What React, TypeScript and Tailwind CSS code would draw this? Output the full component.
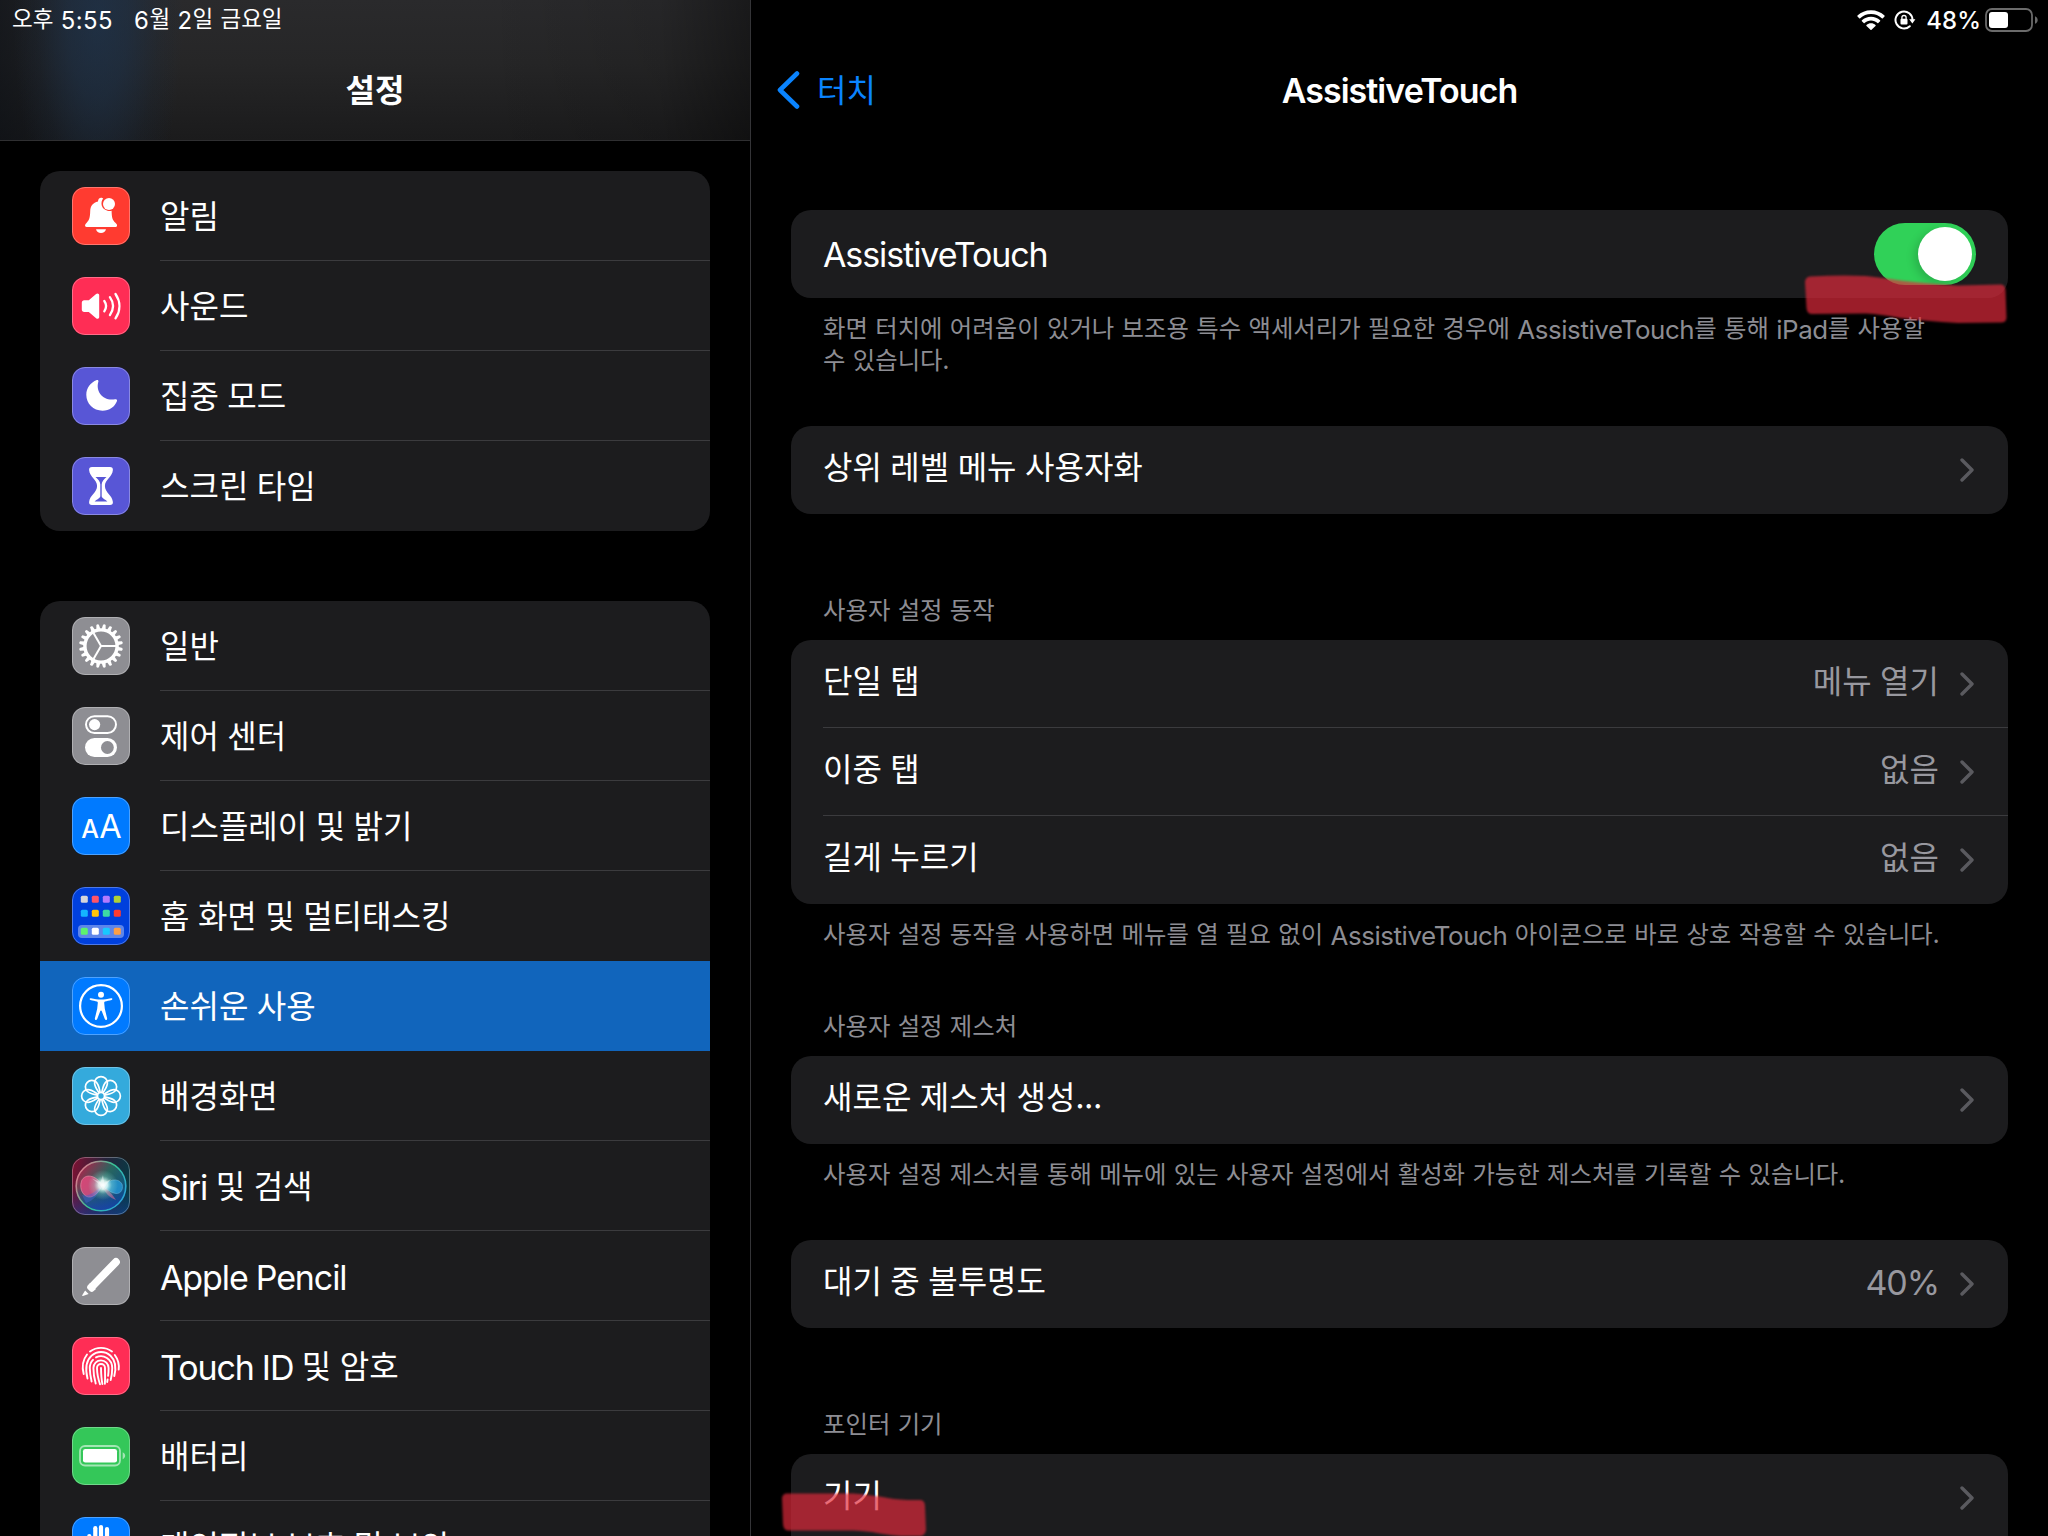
import React from "react";
import clsx from "clsx";

// Latin runs are set in Inter, a little larger than the Hangul beside them,
// and the Hangul sits slightly above the Latin baseline
function Label({ children, latin = "tracking-[-0.032em]" }: { children: string; latin?: string }) {
  const parts = children.split(/([A-Za-z0-9%:]+(?: [A-Za-z0-9%:]+)*)/);
  return (
    <span>
      {parts.map((part, i) => {
        if (!part) return null;
        return i % 2 === 1 ? (
          <span key={i} className={clsx("font-['Inter',sans-serif] text-[1.0625em] leading-none", latin)}>
            {part}
          </span>
        ) : (
          <span key={i} className="align-[0.07em] leading-none">{part}</span>
        );
      })}
    </span>
  );
}

const BellIcon = () => (
  <>
    <path
      fill="#fff"
      d="M26 14.6c0-2.400 1.300-3.900 3.200-3.900 1 0 1.400.3 2 .8-3.200 4-2 10.500 4.300 12.200 1.400.4 3 .4 4.100 0 .2 6.600.7 9.100 3.800 12.100 1.400 1.300 2.200 2.400 1.300 3.600-.3.400-.8.500-1.400.500H14.700c-1.600 0-2.200-1.800-1.100-3 3.300-3.300 4.400-5.100 4.600-12.600.2-5.400 2.800-8.600 7.800-9.700z"
    />
    <circle cx="37" cy="17" r="6" fill="#fff" />
    <path fill="#fff" d="M24 42.200h10c-.4 2.400-2.500 3.800-5 3.800s-4.600-1.400-5-3.800z" />
  </>
);

const SoundIcon = () => (
  <>
    <path
      fill="#fff"
      d="M12.200 23.300h4.600l7.300-6.300c1.300-1.100 3.100-.4 3.100 1.300v21.600c0 1.700-1.800 2.400-3.100 1.300l-7.300-6.200h-4.600c-1.500 0-2.400-.9-2.400-2.400v-6.900c0-1.500.9-2.400 2.400-2.400z"
    />
    <g fill="none" stroke="#fff" strokeWidth="2.3" strokeLinecap="round">
      <path d="M32.300 24c2.300 3.300 2.300 7 0 10.300" />
      <path d="M37.900 20.200c4 5.600 4 12.200 0 17.900" />
      <path d="M43.500 17c5.200 7.600 5.200 16.700 0 24.300" />
    </g>
  </>
);

const MoonIcon = () => (
  <path
    fill="#fff"
    d="M24.800 13c.9-.4 1.900.3 1.600 1.400-3.200 10.200 4.900 20 16.700 17.800 1.200-.2 2.300.5 1.900 1.700-2.200 5.800-7.700 9.800-14.500 9.800-9.300 0-16.200-6.800-16.200-15.900 0-6.600 4.200-12.400 10.500-14.800z"
  />
);

const HourglassIcon = () => (
  <>
    <path
      fill="#fff"
      d="M20 9.900h18c2 0 3.100 1 2.900 3-.5 6.900-8 9.500-8 16.100s7.500 9.200 8 16.100c.2 2-.9 3-2.900 3H20c-2 0-3.100-1-2.900-3 .5-6.900 8-9.500 8-16.100s-7.500-9.200-8-16.100c-.2-2 .9-3 2.900-3z"
    />
    <path
      fill="#5856d6"
      d="M23.500 20h11c-2.600 2.400-4.800 4.500-4.800 7.500V39c0 2 2.700 3 5.700 5.400H22.600c3-2.400 5.700-3.400 5.700-5.400V27.500c0-3-2.200-5.100-4.800-7.500z"
    />
  </>
);

const teeth = Array.from({ length: 20 }, (_, i) => i * 18 + 9);

const GearIcon = () => (
  <>
    <g fill="#fff">
      {teeth.map((a) => (
        <path key={a} d="M26.900 13l.8-5.400q1.300-1.200 2.600 0L31.100 13z" transform={`rotate(${a} 29 29)`} />
      ))}
    </g>
    <g fill="none" stroke="#fff">
      <circle cx="29" cy="29" r="16.100" strokeWidth="3.400" />
      {[90, 210, 330].map((a) => (
        <path key={a} d="M29 29V14" strokeWidth="2" transform={`rotate(${a} 29 29)`} />
      ))}
    </g>
  </>
);

const TogglesIcon = () => (
  <>
    <rect x="14" y="9.200" width="30" height="16.800" rx="8.400" fill="none" stroke="#fff" strokeWidth="2" />
    <circle cx="22.600" cy="17.600" r="5.600" fill="#fff" />
    <rect x="13" y="31" width="32" height="19" rx="9.500" fill="#fff" />
    <circle cx="35.400" cy="40.500" r="6.400" fill="#8e8e93" />
  </>
);

const TextSizeIcon = () => (
  <g fill="#fff" className="font-['Inter',sans-serif]" textAnchor="middle">
    <text x="18" y="41.300" fontSize="25" fontWeight="500">A</text>
    <text x="38.400" y="41.300" fontSize="32.500" fontWeight="400">A</text>
  </g>
);

const apps = [
  ["#d5d5da", "#ff5468", "#b37aff", "#aed136"],
  ["#14b5ff", "#ffc60a", "#3ddaa4", "#ff3b30"],
  ["#5df26d", "#ffffff", "#18c8ff", "#ff9f45"],
];

const HomeIcon = () => (
  <>
    <rect x="6" y="38" width="46" height="13" rx="4" fill="#5e86ea" />
    {apps.map((row, r) =>
      row.map((color, c) => (
        <rect key={color} x={8.8 + c * 11} y={[8.8, 22.8, 40.8][r]} width="7" height="7" rx="1.500" fill={color} />
      ))
    )}
  </>
);

const AccessibilityIcon = () => (
  <>
    <circle cx="29" cy="29" r="20.900" fill="none" stroke="#fff" strokeWidth="2.200" />
    <circle cx="29" cy="17.800" r="3" fill="#fff" />
    <path
      fill="#fff"
      d="M18.900 21.200c3.600.9 6.800 1.400 10.100 1.400s6.500-.5 10.100-1.400c1.400-.3 1.800 1.400.5 1.800-2.500.7-4.900 1.100-6.600 1.500-.7.200-.9.700-.8 1.500l.6 5.800 2.300 9.500c.4 1.800-1.700 2.300-2.300.7l-3-7.800c-.3-.9-1.300-.9-1.600 0l-3 7.800c-.6 1.600-2.700 1.100-2.300-.7l2.300-9.500.6-5.800c.1-.8-.1-1.300-.8-1.500-1.700-.4-4.100-.8-6.600-1.500-1.300-.4-.9-2.100.5-1.800z"
    />
  </>
);

const FlowerIcon = () => (
  <g fill="none" stroke="#fff" strokeWidth="1.700">
    {[0, 45, 90, 135, 180, 225, 270, 315].map((a) => (
      <path
        key={a}
        d="M27 25.800C25 22.500 22.600 19.500 22.600 15.900a6.400 6.300 0 0 1 12.800 0c0 3.600-2.400 6.600-4.400 9.900"
        transform={`rotate(${a} 29 29)`}
      />
    ))}
    <circle cx="29" cy="29" r="3.500" />
  </g>
);

const SiriIcon = () => (
  <>
    <defs>
      <linearGradient id="siri-bg" x1="0" y1="0.3" x2="1" y2="0.5">
        <stop offset="0" stopColor="#7a1233" />
        <stop offset="0.5" stopColor="#27243c" />
        <stop offset="1" stopColor="#063b45" />
      </linearGradient>
      <linearGradient id="siri-orb" x1="0.1" y1="0.2" x2="0.9" y2="0.8">
        <stop offset="0" stopColor="#9c2b4d" />
        <stop offset="0.45" stopColor="#28655f" />
        <stop offset="1" stopColor="#0b4f86" />
      </linearGradient>
      <linearGradient id="siri-ring" x1="0" y1="0.2" x2="1" y2="0.8">
        <stop offset="0" stopColor="#f0728d" />
        <stop offset="0.5" stopColor="#35c495" />
        <stop offset="1" stopColor="#2aa0e0" />
      </linearGradient>
      <linearGradient id="siri-low" x1="0" y1="0" x2="0" y2="1">
        <stop offset="0.55" stopColor="#1838a8" stopOpacity="0" />
        <stop offset="1" stopColor="#1b3fb5" stopOpacity="0.75" />
      </linearGradient>
      <radialGradient id="siri-glow">
        <stop offset="0" stopColor="#fff" />
        <stop offset="0.3" stopColor="#e6fff9" stopOpacity="0.85" />
        <stop offset="0.6" stopColor="#9fe8dd" stopOpacity="0.3" />
        <stop offset="1" stopColor="#9fe8dd" stopOpacity="0" />
      </radialGradient>
    </defs>
    <rect width="58" height="58" fill="url(#siri-bg)" />
    <rect width="58" height="58" fill="url(#siri-low)" opacity="0.6" />
    <circle cx="29" cy="29" r="24.800" fill="url(#siri-orb)" stroke="url(#siri-ring)" strokeWidth="1.600" />
    <circle cx="29" cy="29" r="24" fill="url(#siri-low)" />
    <path d="M30 28C24 18 13 16 9.500 24c-3 9 3 17 9 16 5-1 9-6 11.500-12z" fill="#ea4a80" opacity="0.8" stroke="#ff9cb8" strokeWidth="0.700" />
    <path d="M31 29c5-6 15-9 19-2 2 7-3 11-8 9-4-1-8-4-11-7z" fill="#27a2e6" opacity="0.7" stroke="#7fd4ff" strokeWidth="0.600" />
    <path d="M30 29c5 2 10 8 14 14-6-2-11-7-14-14z" fill="#cf6a9a" opacity="0.6" />
    <path d="M10 38c6 2 13-3 20-9-4 9-9 15-16 17z" fill="#4b62d8" opacity="0.45" />
    <circle cx="31" cy="28" r="15" fill="url(#siri-glow)" />
    <path d="M31 18l1.200 7.500L39 22l-4.500 5.500L31 33l-3-5-8-6.500 8.500 3.800z" fill="#fff" opacity="0.4" />
  </>
);

const PencilIcon = () => (
  <>
    <path stroke="#fff" strokeWidth="7.800" strokeLinecap="round" d="M44 15L21 38.600" />
    <path fill="#fff" d="M18 36l6 6-2.600 2.300c-1 .8-2.200.8-3.400 0l-2.300-2.300c-1-1.200-.9-2.300 0-3.500z" />
    <path fill="#fff" d="M13.100 43.600l3.500 3.400-5.700 2c-.6.100-.9-.2-.7-.7z" />
  </>
);

const FingerprintIcon = () => (
  <g fill="none" stroke="#fff" strokeWidth="1.900" strokeLinecap="round">
    <path d="M18 14.500C24.500 9.600 33.500 9.600 40 14.500" />
    <path d="M42.800 18c3.300 4.500 4.500 9.300 3.900 14.500" />
    <path d="M15 17.500c-4.300 5.500-5.300 12-3.300 19.500" />
    <path d="M15.500 41.500c-2.800-11.500-.8-18.500 4.100-22.900 5.400-4.800 13.600-4.800 18.900.1 5.500 5.100 5.900 11.800 3.800 20.300" />
    <path d="M19.600 44.500c-1.300-5.500-1.800-8.500-1.800-13.500 0-3.800 1.300-6.300 3.200-8.200" />
    <path d="M24 20.400c7.500-3.700 16.200 1.600 16.200 10.600 0 4.500-.4 8-1.500 12" />
    <path d="M23.700 46.500c-1.700-6-2.300-10-2.300-15.500 0-4.300 3.300-7.600 7.600-7.600s7.600 3.400 7.600 7.600c0 3-.1 5.500-.5 7.800" />
    <path d="M28 47.300c-2-6-3-10.300-3-16.300 0-2.200 1.700-4 4-4s4 1.800 4 4c0 5.800.3 9.500-.1 15.700" />
    <path d="M29 31c.1 6 .3 10.500 1.400 16" />
    <path d="M35.600 42.500l-.4 2.500" />
  </g>
);

const BatteryIcon = () => (
  <>
    <rect x="8" y="19" width="40" height="19.500" rx="5" fill="none" stroke="#fff" strokeOpacity="0.55" strokeWidth="1.800" />
    <rect x="11" y="21.900" width="34" height="13.700" rx="2.400" fill="#fff" />
    <path fill="#fff" fillOpacity="0.55" d="M50.700 25.300c3.300 1.600 3.300 5.300 0 6.900z" />
  </>
);

const HandIcon = () => (
  <>
    <g stroke="#fff" strokeWidth="4.200" strokeLinecap="round">
      <path d="M17.300 19v12" />
      <path d="M23.300 11.200V30" />
      <path d="M29 10V30" />
      <path d="M35 12V30" />
    </g>
    <path fill="#fff" d="M15.200 28h22v8l5-5c2-2 4 0 3 2-4 9-8 15-16 15s-14-6-14-14z" />
  </>
);

interface Item {
  label: string;
  bg: string;
  icon: React.FC;
  selected?: boolean;
}

const groups: Item[][] = [
  [
    { label: "알림", bg: "bg-[#ff3b30]", icon: BellIcon },
    { label: "사운드", bg: "bg-[#ff2d55]", icon: SoundIcon },
    { label: "집중 모드", bg: "bg-[#5856d6]", icon: MoonIcon },
    { label: "스크린 타임", bg: "bg-[#5856d6]", icon: HourglassIcon },
  ],
  [
    { label: "일반", bg: "bg-[#8e8e93]", icon: GearIcon },
    { label: "제어 센터", bg: "bg-[#8e8e93]", icon: TogglesIcon },
    { label: "디스플레이 및 밝기", bg: "bg-[#007aff]", icon: TextSizeIcon },
    { label: "홈 화면 및 멀티태스킹", bg: "bg-[#0040dd]", icon: HomeIcon },
    { label: "손쉬운 사용", bg: "bg-[#007aff]", icon: AccessibilityIcon, selected: true },
    { label: "배경화면", bg: "bg-[#34aadc]", icon: FlowerIcon },
    { label: "Siri 및 검색", bg: "bg-[#1f2333]", icon: SiriIcon },
    { label: "Apple Pencil", bg: "bg-[#8e8e93]", icon: PencilIcon },
    { label: "Touch ID 및 암호", bg: "bg-[#ff2d55]", icon: FingerprintIcon },
    { label: "배터리", bg: "bg-[#34c759]", icon: BatteryIcon },
    { label: "개인정보 보호 및 보안", bg: "bg-[#007aff]", icon: HandIcon },
  ],
];

function SidebarRow({ item, line }: { item: Item; line: boolean }) {
  const Icon = item.icon;
  return (
    <div className={clsx("flex h-[90px] shrink-0 items-center pl-8", item.selected && "bg-[#1165bc]")}>
      <div className={clsx("relative size-[58px] shrink-0 overflow-hidden rounded-[13px]", item.bg)}>
        <svg viewBox="0 0 58 58" className="size-[58px]">
          <Icon />
        </svg>
        <div className="absolute inset-0 rounded-[13px] border border-white/30" />
      </div>
      <div className={clsx("ml-[30px] flex h-full flex-1 items-center border-b", line ? "border-[#3b3b3e]" : "border-transparent")}>
        <Label>{item.label}</Label>
      </div>
    </div>
  );
}

function Sidebar() {
  return (
    <aside className="flex h-full w-[751px] shrink-0 flex-col overflow-hidden border-r border-[#343437]">
      <header className="flex h-[141px] shrink-0 flex-col border-b border-[#2f2f31] bg-[radial-gradient(ellipse_85px_220px_at_98px_20px,rgba(30,52,78,0.72),rgba(30,50,74,0.6)_35%,rgba(30,48,70,0.2)_72%,transparent),linear-gradient(to_right,rgba(10,14,20,0.6),rgba(10,14,20,0.25)_70px,transparent_180px,transparent_480px,rgba(0,0,0,0.1)_660px,rgba(0,0,0,0.4)),linear-gradient(to_bottom,#2a2a2c,#262627_45%,#1b1b1c)]">
        <div className="flex h-10 items-center gap-[21px] pb-0.5 pl-3 text-[22.5px] [word-spacing:1px]">
          <Label latin="tracking-[0.02em]">오후 5:55</Label>
          <Label latin="tracking-[0.02em]">6월 2일 금요일</Label>
        </div>
        <h1 className="flex h-[100px] items-center justify-center text-[32px] font-bold">
          <Label>설정</Label>
        </h1>
      </header>
      <nav className="flex flex-col gap-[70px] px-10 pt-[30px]">
        {groups.map((group, g) => (
          <div key={g} className="flex flex-col overflow-hidden rounded-[20px] bg-[#1c1c1e]">
            {group.map((item, i) => (
              <SidebarRow
                key={item.label}
                item={item}
                line={i < group.length - 1 && !item.selected && !group[i + 1].selected}
              />
            ))}
          </div>
        ))}
      </nav>
    </aside>
  );
}

function Row({ label, value, line }: { label: string; value?: string; line?: boolean }) {
  return (
    <div className="flex h-[88px] items-center pl-8">
      <div className={clsx("flex h-full flex-1 items-center border-b pr-[34px]", line ? "border-[#3b3b3e]" : "border-transparent")}>
        <div className="flex flex-1 items-baseline justify-between pb-1.5">
          <Label>{label}</Label>
          {value && (
            <span className="text-[#98989f]">
              <Label>{value}</Label>
            </span>
          )}
        </div>
        <svg viewBox="0 0 14 24" className="ml-[21px] h-6 w-3.5" fill="none" stroke="#5a5a5f" strokeWidth="3.400" strokeLinecap="round" strokeLinejoin="round">
          <path d="M2 2l10 10L2 22" />
        </svg>
      </div>
    </div>
  );
}

function Card({ children }: { children: React.ReactNode }) {
  return <div className="shrink-0 overflow-hidden rounded-[20px] bg-[#1c1c1e]">{children}</div>;
}

function Note({ children }: { children: string }) {
  return (
    <p className="pl-8 text-[24.4px] leading-8 text-[#8d8d93] [word-spacing:0.5px]">
      {children.split("\n").map((text) => (
        <span key={text} className="block">
          <Label latin="tracking-[-0.016em]">{text}</Label>
        </span>
      ))}
    </p>
  );
}

function StatusIcons() {
  return (
    <div className="flex h-10 shrink-0 items-center justify-end pr-[9px]">
      <svg viewBox="0 0 28 20" className="mr-[9px] h-5 w-7" fill="#fff">
        <path d="M14 .3c5.300 0 10 2 13.500 5.300.3.300.3.700 0 1l-1.700 1.700c-.3.300-.7.300-1 0C22 5.600 18.200 4.100 14 4.100S6 5.600 3.200 8.300c-.3.300-.7.300-1 0L.5 6.600c-.3-.3-.3-.7 0-1C4 2.300 8.700.3 14 .3z" />
        <path d="M14 6.800c3.500 0 6.700 1.300 9.100 3.500.3.300.3.700 0 1l-1.800 1.800c-.3.300-.6.300-.9 0-1.700-1.500-3.900-2.500-6.400-2.500s-4.700 1-6.400 2.500c-.3.300-.6.300-.9 0l-1.800-1.800c-.3-.3-.3-.7 0-1C7.300 8.100 10.500 6.800 14 6.800z" />
        <path d="M14 13.200c1.700 0 3.300.6 4.500 1.700.3.300.3.700 0 1l-4 3.900c-.3.300-.7.300-1 0l-4-3.900c-.3-.3-.3-.7 0-1 1.200-1.100 2.800-1.700 4.500-1.700z" />
      </svg>
      <svg viewBox="0 0 22 20" className="mr-[10px] h-5 w-[22px]" fill="none">
        <path d="M15.800 16.200A8.500 8.500 0 1 1 18.500 10" stroke="#fff" strokeWidth="2" strokeLinecap="round" />
        <path d="M15.200 9.200h6.200l-3 4.200z" fill="#fff" />
        <rect x="6.500" y="8.800" width="7" height="5.800" rx="1" fill="#fff" />
        <path d="M7.900 9V7.600a2.100 2.100 0 0 1 4.200 0V9" stroke="#fff" strokeWidth="1.300" />
      </svg>
      <span className="mr-1 pb-0.5 text-[22.5px]">
        <Label latin="tracking-[0.005em] font-medium">48%</Label>
      </span>
      <svg viewBox="0 0 54 24" className="h-6 w-[54px]" fill="none">
        <rect x="1" y="1" width="46" height="22" rx="6" stroke="#6b6b6b" strokeWidth="1.800" />
        <rect x="4" y="4" width="19" height="16" rx="3" fill="#fff" />
        <path d="M50 8.200c3.600 1.500 3.600 6.100 0 7.600z" fill="#6b6b6b" />
      </svg>
    </div>
  );
}

function Detail() {
  return (
    <main className="flex h-full flex-1 flex-col overflow-hidden">
      <StatusIcons />
      <header className="grid h-[100px] shrink-0 grid-cols-3 items-center px-[26px]">
        <div className="flex items-center gap-[17px] text-[#0a84ff]">
          <svg viewBox="0 0 23 38" className="h-[38px] w-[23px]" fill="none" stroke="currentColor" strokeWidth="4.600" strokeLinecap="round" strokeLinejoin="round">
            <path d="M20 2.500L3 19l17 16.500" />
          </svg>
          <Label>터치</Label>
        </div>
        <h2 className="pb-[3px] text-center font-semibold">
          <Label latin="tracking-[-0.028em]">AssistiveTouch</Label>
        </h2>
      </header>
      <div className="flex flex-col px-10 pt-[70px]">
        <Card>
          <div className="flex h-[88px] items-center justify-between px-8">
            <div className="pb-[3px]">
              <Label>AssistiveTouch</Label>
            </div>
            <div className="flex h-[62px] w-[102px] items-center justify-end rounded-full bg-[#30d158] p-1">
              <div className="size-[54px] rounded-full bg-white shadow-[-4px_3px_8px_rgba(0,0,0,0.15)]" />
            </div>
          </div>
        </Card>
        <div className="h-32 pt-[15px]">
          <Note>{"화면 터치에 어려움이 있거나 보조용 특수 액세서리가 필요한 경우에 AssistiveTouch를 통해 iPad를 사용할\n수 있습니다."}</Note>
        </div>
        <Card>
          <Row label="상위 레벨 메뉴 사용자화" />
        </Card>
        <div className="flex h-[126px] flex-col justify-end pb-[13px]">
          <Note>사용자 설정 동작</Note>
        </div>
        <Card>
          <Row label="단일 탭" value="메뉴 열기" line />
          <Row label="이중 탭" value="없음" line />
          <Row label="길게 누르기" value="없음" />
        </Card>
        <div className="flex h-[152px] flex-col justify-between pt-[15px] pb-[13px]">
          <Note>사용자 설정 동작을 사용하면 메뉴를 열 필요 없이 AssistiveTouch 아이콘으로 바로 상호 작용할 수 있습니다.</Note>
          <Note>사용자 설정 제스처</Note>
        </div>
        <Card>
          <Row label="새로운 제스처 생성..." />
        </Card>
        <div className="h-24 pt-[15px]">
          <Note>사용자 설정 제스처를 통해 메뉴에 있는 사용자 설정에서 활성화 가능한 제스처를 기록할 수 있습니다.</Note>
        </div>
        <Card>
          <Row label="대기 중 불투명도" value="40%" />
        </Card>
        <div className="flex h-[126px] flex-col justify-end pb-[13px]">
          <Note>포인터 기기</Note>
        </div>
        <Card>
          <Row label="기기" line />
          <Row label="" />
        </Card>
      </div>
    </main>
  );
}

// Translucent red marker strokes drawn over the screen
function Markers() {
  return (
    <svg viewBox="0 0 2048 1536" className="pointer-events-none absolute inset-0 size-full blur-[0.8px]" fill="#e02a3c" fillOpacity="0.69">
      <path d="M1810 276.500Q1840 275 1866 276Q1885 278 1904 281Q1935 284 1958 285.500L2000 284.500Q2005 284 2005.500 290L2006.500 318Q2006 322.500 2001 322.500L1958 323Q1925 321 1900 318Q1880 314 1866 313.500L1812 314Q1807 314 1806.500 308L1805 282Q1805.500 277 1810 276.500z" />
      <path d="M786 1493.500H853Q872 1495 888 1498Q902 1500.500 921 1500Q925 1501 925 1506L926 1530Q925 1536 918 1537Q890 1536 872 1532Q858 1530 850 1530.500H788Q783.500 1530 783 1524L782 1498Q782.500 1494 786 1493.500z" />
    </svg>
  );
}

export default function App() {
  return (
    <div
      lang="ko"
      className="relative flex h-[1536px] w-[2048px] overflow-hidden bg-black font-['Noto_Sans_CJK_KR',sans-serif] text-[32px] leading-tight whitespace-nowrap text-white [word-spacing:-0.5px]"
    >
      <Sidebar />
      <Detail />
      <Markers />
    </div>
  );
}
